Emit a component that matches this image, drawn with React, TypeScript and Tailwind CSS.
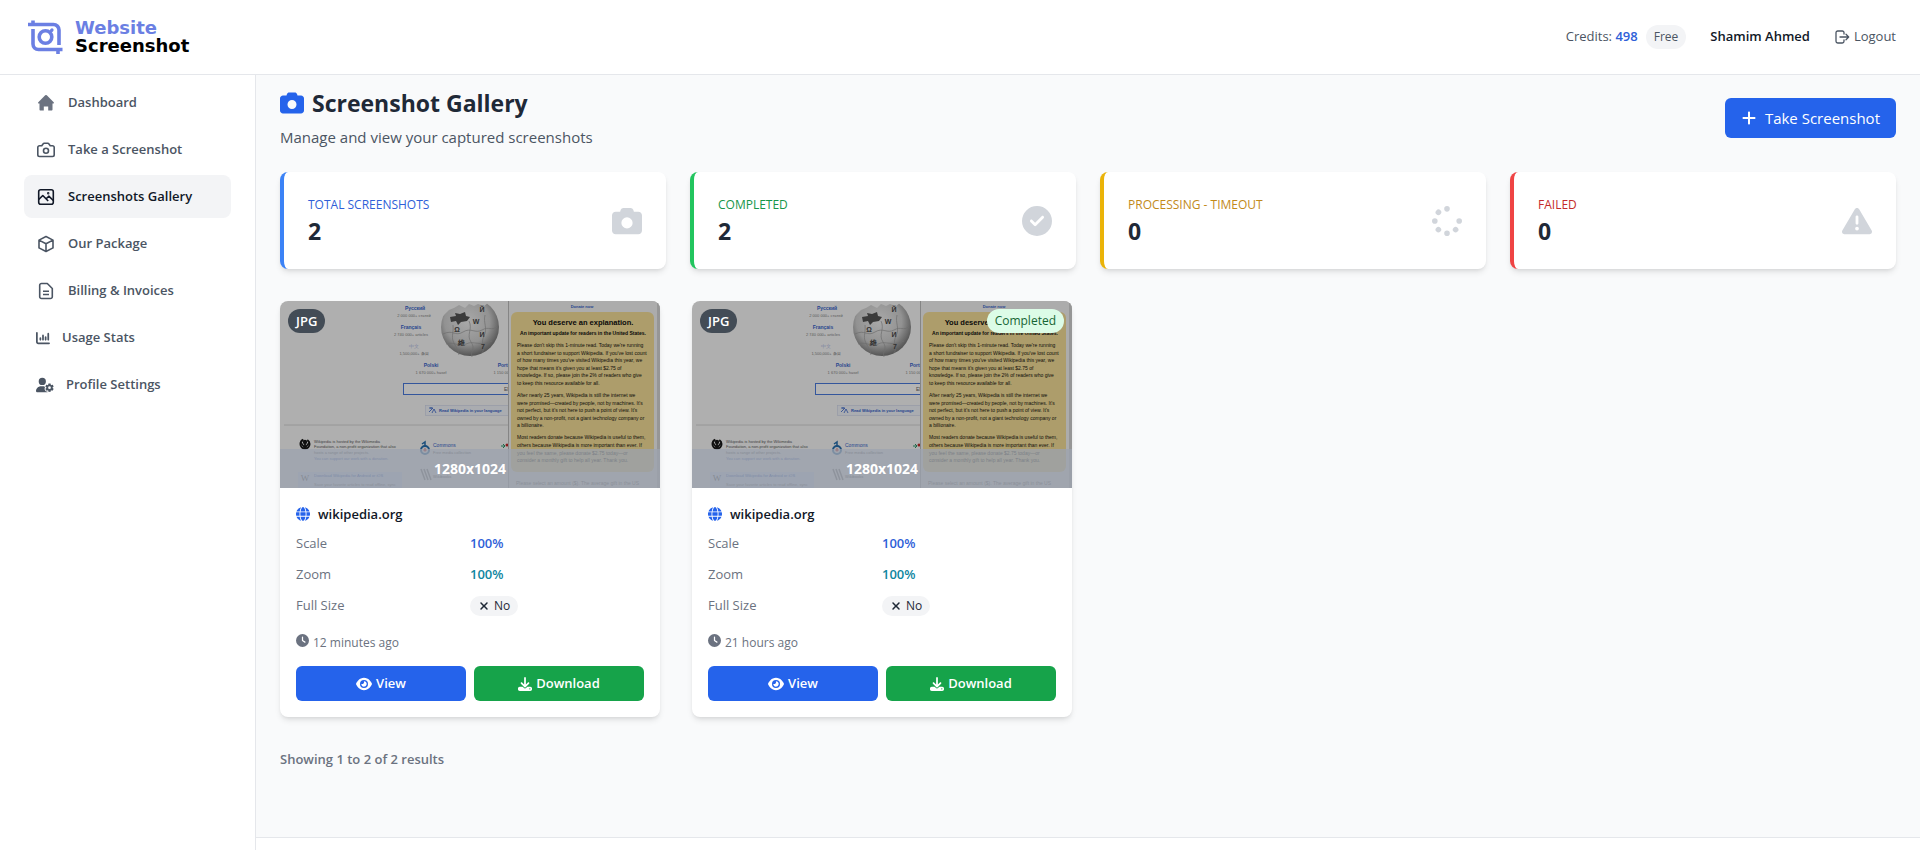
import type { ReactNode } from 'react';
import {
  FaCamera,
  FaChartColumn,
  FaCircleCheck,
  FaClock,
  FaDownload,
  FaEye,
  FaGlobe,
  FaPlus,
  FaSpinner,
  FaTriangleExclamation,
  FaUserGear,
  FaXmark,
} from 'react-icons/fa6';

const DONATION_LINES: [number, string][] = [
  [46, "Please don't skip this 1-minute read. Today we're running"],
  [54, "a short fundraiser to support Wikipedia. If you've lost count"],
  [61, "of how many times you've visited Wikipedia this year, we"],
  [69, "hope that means it's given you at least $2.75 of"],
  [76, 'knowledge. If so, please join the 2% of readers who give'],
  [84, 'to keep this resource available for all.'],
  [96, 'After nearly 25 years, Wikipedia is still the internet we'],
  [104, "were promised—created by people, not by machines. It's"],
  [111, "not perfect, but it's not here to push a point of view. It's"],
  [119, 'owned by a non-profit, not a giant technology company or'],
  [126, 'a billionaire.'],
  [138, 'Most readers donate because Wikipedia is useful to them,'],
  [146, 'others because Wikipedia is more important than ever. If'],
  [154, 'you feel the same, please donate $2.75 today—or'],
  [161, 'consider a monthly gift to help all year. Thank you.'],
];

function Logo() {
  return (
    <a href="#" className="flex items-center gap-3">
      <svg viewBox="0 0 35 34" fill="none" className="h-[34px] w-[35px]" stroke="#6b7fe3" strokeWidth="3.6">
        <path d="M0 4.500H25.500a5.500 5.500 0 0 1 5.500 5.500V25" />
        <path d="M5 0.500V4M5 9V24a5.500 5.500 0 0 0 5.500 5.500H34.500M30 28V34" />
        <circle cx="17.500" cy="17" r="6.300" />
        <path d="M23.500 10.500l.5-.5" strokeWidth="3.200" strokeLinecap="round" />
      </svg>
      <span className="flex flex-col font-['DejaVu_Sans',sans-serif] text-lg leading-[18px] font-bold">
        <span className="text-[#6b7fe3]">Website</span>
        <span className="text-black">Screenshot</span>
      </span>
    </a>
  );
}

function HomeIcon() {
  return (
    <svg viewBox="0 0 18 18" fill="#6b7280" className="h-[18px] w-[18px]">
      <path d="M8.200 1.300a1.100 1.100 0 0 1 1.600 0l6.900 6.900c.6.600.2 1.300-.6 1.300h-.6v6.100c0 .6-.4 1-1 1h-3.300v-4.200H6.800v4.200H3.500c-.6 0-1-.4-1-1V9.500h-.6c-.8 0-1.200-.7-.6-1.300z" />
    </svg>
  );
}

function CameraIcon() {
  return (
    <svg viewBox="0 0 18 18" fill="none" stroke="currentColor" strokeWidth="1.600" className="h-[18px] w-[18px]">
      <path d="M2.500 4.800h2.300l1.400-2a1.300 1.300 0 0 1 1-.6h3.600a1.300 1.300 0 0 1 1 .6l1.400 2h2.300a1.700 1.700 0 0 1 1.700 1.700v7.300a1.700 1.700 0 0 1-1.700 1.700h-13a1.700 1.700 0 0 1-1.700-1.700V6.500a1.700 1.700 0 0 1 1.700-1.700z" />
      <circle cx="9" cy="9.800" r="2.500" />
    </svg>
  );
}

function GalleryIcon() {
  return (
    <svg viewBox="0 0 18 18" fill="none" stroke="currentColor" strokeWidth="1.600" strokeLinejoin="round" className="h-[18px] w-[18px]">
      <rect x="1.700" y="1.700" width="14.600" height="14.600" rx="2" />
      <path d="M1.700 11.500l4.100-4 5.400 5.500M9.200 10.800l2.600-2.600 4.500 4.300" />
      <circle cx="11.200" cy="5.200" r=".4" fill="currentColor" />
    </svg>
  );
}

function PackageIcon() {
  return (
    <svg viewBox="0 0 18 18" fill="none" stroke="currentColor" strokeWidth="1.600" strokeLinejoin="round" className="h-[18px] w-[18px]">
      <path d="M9 1.500l7 3.600v7.800l-7 3.600-7-3.600V5.100zM2 5.100l7 3.700 7-3.700M9 8.800v7.700" />
    </svg>
  );
}

function InvoiceIcon() {
  return (
    <svg viewBox="0 0 18 18" fill="none" stroke="currentColor" strokeWidth="1.600" strokeLinejoin="round" className="h-[18px] w-[18px]">
      <path d="M4.500 1.500h5.800l5 5v8.200a1.800 1.800 0 0 1-1.800 1.800h-9a1.800 1.800 0 0 1-1.800-1.800V3.300a1.800 1.800 0 0 1 1.800-1.800zM6 9.200h6M6 12.500h6" />
    </svg>
  );
}

function LogoutIcon() {
  return (
    <svg viewBox="0 0 16 16" fill="none" stroke="currentColor" strokeWidth="1.300" strokeLinecap="round" strokeLinejoin="round" className="h-4 w-4">
      <path d="M10 5V3.700A1.700 1.700 0 0 0 8.300 2H3.700A1.700 1.700 0 0 0 2 3.700v8.600A1.700 1.700 0 0 0 3.700 14h4.600a1.700 1.700 0 0 0 1.700-1.700V11" />
      <path d="M6 8h8.500M12 5.300L14.700 8 12 10.700" />
    </svg>
  );
}

interface NavItemProps {
  icon: ReactNode;
  label: string;
  active?: boolean;
  tight?: boolean;
}

function NavItem({ icon, label, active = false, tight = false }: NavItemProps) {
  const state = active ? 'bg-[#f3f4f6] text-[#111827]' : 'text-[#4b5563]';
  return (
    <a
      href="#"
      aria-current={active ? 'page' : undefined}
      className={`flex h-[43px] items-center rounded-lg text-[13px] font-semibold ${tight ? 'gap-3 px-3' : 'gap-[13px] px-[13px]'} ${state}`}
    >
      {icon}
      {label}
    </a>
  );
}

interface StatCardProps {
  label: string;
  value: number;
  icon: ReactNode;
  border: string;
  color: string;
}

function StatCard({ label, value, icon, border, color }: StatCardProps) {
  return (
    <div className={`flex h-[97px] items-center justify-between rounded-lg border-l-4 bg-white px-6 shadow-md ${border}`}>
      <div>
        <p className={`text-xs leading-5 font-medium uppercase ${color}`}>{label}</p>
        <p className="text-[23px] leading-8 font-bold text-[#1f2937]">{value}</p>
      </div>
      <span className="text-[#d1d5db]">{icon}</span>
    </div>
  );
}

function WikipediaPreview() {
  return (
    <svg
      viewBox="0 0 380 187"
      preserveAspectRatio="xMidYMin slice"
      className="h-full w-full font-['Liberation_Sans',sans-serif]"
      fontSize="5"
      aria-label="Page preview"
    >
      <rect width="380" height="187" fill="#afafaf" />

      {/* Language links around the globe */}
      <g textAnchor="middle" fill="#5a5a5a">
        <g fill="#27468e" fontWeight="bold">
          <text x="135" y="9">Русский</text>
          <text x="131" y="28">Français</text>
          <text x="151" y="66">Polski</text>
          <text x="230" y="66">Português</text>
        </g>
        <text x="134" y="47" fill="#7d84a0">中文</text>
        <text x="134" y="16" fontSize="4">2 000 000+ статей</text>
        <text x="131" y="35" fontSize="4">2 740 000+ articles</text>
        <text x="134" y="54" fontSize="4">1,500,000+ 条目</text>
        <text x="151" y="73" fontSize="4">1 670 000+ haseł</text>
        <text x="230" y="73" fontSize="4">1 150 000+ artigos</text>
      </g>

      {/* Puzzle globe */}
      <defs>
        <radialGradient id="globe" cx="45%" cy="40%" r="60%">
          <stop offset="0" stopColor="#a9a9a9" />
          <stop offset=".65" stopColor="#929292" />
          <stop offset="1" stopColor="#555" />
        </radialGradient>
      </defs>
      <circle cx="190" cy="26" r="29" fill="url(#globe)" />
      <path d="M160-4h56v5l-8 1-4 3-6-2-4 2-5-2-4 4-6-3-5 3-5 2-4 4-5 5z" fill="#afafaf" />
      <path d="M170 16l6-1-1-3 5 1 5-2 1 4 4 1-3 4-6 1-3 3-2-4-5 1z" fill="#3b3b3b" />
      <g fill="none" stroke="#6e6e6e" strokeWidth=".7">
        <path d="M163 33c10-5 12 3 20-2s12 2 19-2 9 1 15-3" />
        <path d="M166 43c10-3 12 4 20 0s14 3 26-3" />
        <path d="M173 24c1 9-3 12 2 20s3 8 4 10M189 20c4 8-3 14 2 21s-1 9 1 15M205 14c-2 8 3 13-1 21s2 11-2 17" />
      </g>
      <g fill="#303030" fontWeight="bold" fontSize="7" textAnchor="middle">
        <text x="177" y="31">Ω</text>
        <text x="196" y="23">W</text>
        <text x="202" y="36">И</text>
        <text x="181" y="44">維</text>
        <text x="203" y="48">7</text>
        <text x="202" y="11">Й</text>
      </g>

      {/* Search and language picker */}
      <rect x="123.500" y="82.500" width="120" height="11" fill="#b4b4b4" stroke="#34569c" />
      <text x="224" y="90" fill="#444">EN</text>
      <rect x="145.500" y="104.500" width="100" height="10" fill="#aaacb0" stroke="#9297a5" strokeWidth=".6" />
      <path d="M149 107h4M151 106v2M149 111l4-4M152 112l2-4 2 4" fill="none" stroke="#27468e" strokeWidth=".8" />
      <text x="159" y="111" fill="#27468e" fontWeight="bold" fontSize="4">Read Wikipedia in your language</text>
      <path d="M4 124H240" stroke="#969696" />

      {/* Footer projects */}
      <circle cx="25" cy="143" r="4.500" fill="none" stroke="#111" strokeWidth="2" strokeDasharray="24 4" strokeDashoffset="-23" />
      <circle cx="25" cy="141" r="2.200" fill="#111" />
      <path d="M21 142l4 5 4-5M25 143v5" stroke="#111" strokeWidth="1.800" fill="none" />
      <g fill="#3f3f3f" fontSize="4">
        <text x="34" y="142">Wikipedia is hosted by the Wikimedia</text>
        <text x="34" y="147">Foundation, a non-profit organization that also</text>
        <text x="34" y="153">hosts a range of other projects.</text>
        <text x="34" y="159" fill="#27468e">You can support our work with a donation.</text>
        <text x="153" y="146" fill="#27468e" fontSize="5">Commons</text>
        <text x="153" y="153">Free media collection</text>
        <text x="153" y="177">Wikibooks</text>
      </g>
      <circle cx="145" cy="149" r="4" fill="none" stroke="#1c4f7c" strokeWidth="2" />
      <circle cx="145" cy="149" r="1.600" fill="#8b1c1c" />
      <path d="M145 145v-4l-3 2" fill="none" stroke="#1c4f7c" strokeWidth="1.500" />
      <path d="M221 145h4M223 143l2 2-2 2" stroke="#1c6a4a" fill="none" />
      <circle cx="227" cy="144" r="1.500" fill="#8b1c1c" />
      <path d="M141 168l4 11M144 168l4 11M147 168l4 11" stroke="#666" strokeWidth="1.500" />
      <rect x="18" y="171" width="104" height="16" fill="#a0a8b8" />
      <text x="25" y="180" textAnchor="middle" fontSize="9" fill="#444" className="font-['Liberation_Serif',serif]">W</text>
      <g fontSize="4" fill="#27468e">
        <text x="34" y="176">Download Wikipedia for Android or iOS</text>
        <text x="34" y="185" fill="#555">Save your favorite articles to read offline, sync</text>
      </g>

      {/* Donation banner */}
      <rect x="228" width="1" height="187" fill="#858585" />
      <rect x="229" width="151" height="187" fill="#acacac" />
      <rect x="377" width="3" height="187" fill="#969696" />
      <rect x="231" y="11" width="143" height="160" rx="6" fill="#ad9d6b" />
      <text x="302" y="7" textAnchor="middle" fill="#27468e" fontWeight="bold" fontSize="4">Donate now</text>
      <g fill="#0a0a0a" textAnchor="middle" fontWeight="bold">
        <text x="303" y="24" fontSize="7.500">You deserve an explanation.</text>
        <text x="303" y="34" fontSize="5">An important update for readers in the United States.</text>
      </g>
      <g fill="#0f0e0a">
        {DONATION_LINES.map(([y, line]) => (
          <text key={y} x="237" y={y}>{line}</text>
        ))}
      </g>
      <text x="236" y="184" fill="#555">Please select an amount ($). The average gift in the US</text>
    </svg>
  );
}

interface ScreenshotCardProps {
  age: string;
  status?: string;
}

function ScreenshotCard({ age, status }: ScreenshotCardProps) {
  return (
    <article className="overflow-hidden rounded-lg bg-white shadow-md">
      <div className="relative h-[187px]">
        <WikipediaPreview />
        <span className="absolute top-2 left-2 rounded-full bg-[#434c56] px-2 text-[13px] leading-6 font-semibold text-white">
          JPG
        </span>
        {status && (
          <span className="absolute top-2 right-2 rounded-full bg-[#dcfce7] px-2 text-xs leading-6 font-medium text-[#166534]">
            {status}
          </span>
        )}
        <div className="absolute inset-x-0 bottom-0 flex h-[39px] items-center justify-center bg-[#9ca3af]/75 text-sm font-bold text-white">
          1280x1024
        </div>
      </div>

      <div className="p-4">
        <h2 className="flex items-center gap-2 text-[13px] leading-5 font-semibold text-[#111827]">
          <FaGlobe className="text-sm text-[#2563eb]" />
          wikipedia.org
        </h2>
        <dl className="mt-1 grid grid-cols-2 text-[13px] leading-[31px] text-[#6b7280]">
          <dt>Scale</dt>
          <dd className="font-semibold text-[#2f5fd8]">100%</dd>
          <dt>Zoom</dt>
          <dd className="font-semibold text-[#0e869f]">100%</dd>
          <dt>Full Size</dt>
          <dd className="flex items-center">
            <span className="flex items-center gap-1 rounded-full bg-[#f3f4f6] px-2 text-xs leading-5 font-medium text-[#1f2937]">
              <FaXmark />
              No
            </span>
          </dd>
        </dl>
        <p className="mt-2 text-xs leading-7 text-[#6b7280]">
          <FaClock className="mr-1 inline align-baseline text-[13px]" />
          {age}
        </p>
        <div className="mt-[9px] grid grid-cols-2 gap-2 text-[13px] font-semibold text-white">
          <button type="button" className="flex h-[35px] items-center justify-center gap-1 rounded-md bg-[#2563eb]">
            <FaEye className="text-base" />
            View
          </button>
          <button type="button" className="flex h-[35px] items-center justify-center gap-1 rounded-md bg-[#16a34a]">
            <FaDownload className="text-sm" />
            Download
          </button>
        </div>
      </div>
    </article>
  );
}

export default function App() {
  return (
    <div className="flex min-h-screen flex-col bg-[#f9fafb] font-['Open_Sans',sans-serif]">
      <header className="flex h-[75px] items-center justify-between border-b border-[#e5e7eb] bg-white pr-6 pl-7">
        <Logo />
        <div className="flex items-center text-[13px] text-[#4b5563]">
          <span>
            Credits: <b className="font-semibold text-[#2f5fd8]">498</b>
          </span>
          <span className="ml-2 rounded-full bg-[#f3f4f6] px-2 text-xs leading-6">Free</span>
          <span className="ml-6 font-semibold text-[#111827]">Shamim Ahmed</span>
          <button type="button" className="ml-6 flex items-center gap-1">
            <LogoutIcon />
            Logout
          </button>
        </div>
      </header>

      <div className="flex flex-1">
        <aside className="w-64 shrink-0 border-r border-[#e5e7eb] bg-white px-6 pt-1.5">
          <nav className="flex flex-col gap-1">
            <NavItem icon={<HomeIcon />} label="Dashboard" />
            <NavItem icon={<CameraIcon />} label="Take a Screenshot" />
            <NavItem icon={<GalleryIcon />} label="Screenshots Gallery" active />
            <NavItem icon={<PackageIcon />} label="Our Package" />
            <NavItem icon={<InvoiceIcon />} label="Billing & Invoices" />
            <NavItem icon={<FaChartColumn className="text-sm" />} label="Usage Stats" tight />
            <NavItem icon={<FaUserGear className="text-lg" />} label="Profile Settings" tight />
          </nav>
        </aside>

        <div className="flex flex-1 flex-col">
          <main className="flex-1 px-6 pt-3">
            <div className="flex items-center justify-between">
              <div>
                <h1 className="flex items-center gap-2 text-[23px] leading-8 font-bold text-[#1f2937]">
                  <FaCamera className="text-2xl text-[#2563eb]" />
                  Screenshot Gallery
                </h1>
                <p className="mt-1.5 text-[15px] leading-6 text-[#4b5563]">Manage and view your captured screenshots</p>
              </div>
              <button type="button" className="flex h-10 items-center gap-2 rounded-md bg-[#2563eb] px-4 text-[15px] text-white">
                <FaPlus className="text-base" />
                Take Screenshot
              </button>
            </div>

            <section className="mt-[23px] grid grid-cols-4 gap-6">
              <StatCard label="Total Screenshots" value={2} icon={<FaCamera size={30} />} border="border-[#3b82f6]" color="text-[#2f5fd8]" />
              <StatCard label="Completed" value={2} icon={<FaCircleCheck size={30} />} border="border-[#22c55e]" color="text-[#16964a]" />
              <StatCard label="Processing - Timeout" value={0} icon={<FaSpinner size={30} />} border="border-[#eab308]" color="text-[#c28a1a]" />
              <StatCard label="Failed" value={0} icon={<FaTriangleExclamation size={30} />} border="border-[#ef4444]" color="text-[#c42b2b]" />
            </section>

            <section className="mt-8 grid grid-cols-4 gap-8">
              <ScreenshotCard age="12 minutes ago" />
              <ScreenshotCard age="21 hours ago" status="Completed" />
            </section>

            <p className="mt-8 text-[13px] leading-5 font-semibold text-[#6b7280]">Showing 1 to 2 of 2 results</p>
          </main>
          <footer className="h-[13px] border-t border-[#e5e7eb] bg-white" />
        </div>
      </div>
    </div>
  );
}
